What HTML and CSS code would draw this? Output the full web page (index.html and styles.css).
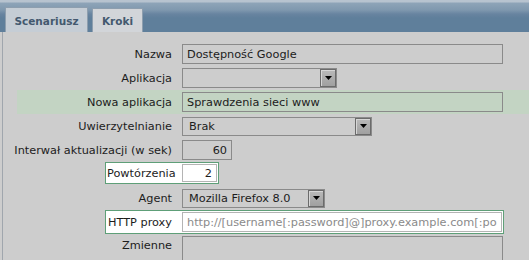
FILE: index.html
```html
<!DOCTYPE html>
<html lang="pl">
<head>
<meta charset="utf-8">
<title>Scenariusz</title>
<link rel="stylesheet" href="styles.css">
</head>
<body>
<div class="tabbar">
  <div class="tab active">Scenariusz</div>
  <div class="tab">Kroki</div>
</div>
<div class="panel">
  <div class="row">
    <div class="lab">Nazwa</div>
    <input class="txt w-long" type="text" value="Dostępność Google">
  </div>
  <div class="row">
    <div class="lab">Aplikacja</div>
    <div class="select w-app"><span class="sel-text"></span><span class="sel-btn"><svg width="7" height="4" viewBox="0 0 7 4"><polygon points="0,0 7,0 3.5,4" fill="#000"/></svg></span></div>
  </div>
  <div class="row hl">
    <div class="lab">Nowa aplikacja</div>
    <input class="txt w-long" type="text" value="Sprawdzenia sieci www">
  </div>
  <div class="row">
    <div class="lab">Uwierzytelnianie</div>
    <div class="select w-auth"><span class="sel-text">Brak</span><span class="sel-btn"><svg width="7" height="4" viewBox="0 0 7 4"><polygon points="0,0 7,0 3.5,4" fill="#000"/></svg></span></div>
  </div>
  <div class="row">
    <div class="lab">Interwał aktualizacji (w sek)</div>
    <input class="txt w-num num" type="text" value="60">
  </div>
  <div class="row boxed top">
    <div class="box">
      <div class="lab-in">Powtórzenia</div>
      <input class="txt white w-rep num" type="text" value="2">
    </div>
  </div>
  <div class="row">
    <div class="lab">Agent</div>
    <div class="select w-agent"><span class="sel-text">Mozilla Firefox 8.0</span><span class="sel-btn"><svg width="7" height="4" viewBox="0 0 7 4"><polygon points="0,0 7,0 3.5,4" fill="#000"/></svg></span></div>
  </div>
  <div class="row boxed">
    <div class="box">
      <div class="lab-in">HTTP proxy</div>
      <input class="txt white w-proxy" type="text" placeholder="http://[username[:password]@]proxy.example.com[:port]">
    </div>
  </div>
  <div class="row tall">
    <div class="lab">Zmienne</div>
    <textarea class="area"></textarea>
  </div>
</div>
</body>
</html>
```
FILE: styles.css
```css
html, body {
  margin: 0;
  padding: 0;
}
body {
  background: #cdcdcd;
  font-family: "DejaVu Sans", Verdana, sans-serif;
  font-size: 11.3px;
  color: #1c1c1c;
  width: 529px;
  height: 260px;
  overflow: hidden;
}
.tabbar {
  height: 32px;
  box-sizing: border-box;
  display: flex;
  align-items: flex-end;
  gap: 4px;
  padding-left: 5px;
  background: linear-gradient(to bottom, #b7c3cf 0, #b7c3cf 2px, #8ea4b8 3px, #7f98ae 10px, #6884a0 14px, #5f7f9b 18px, #5f7f9b 100%);
}
.tab {
  box-sizing: border-box;
  height: 24px;
  border: 1px solid #8d9eae;
  border-bottom: none;
  font-weight: bold;
  font-size: 10.5px;
  color: #43596f;
  display: flex;
  align-items: center;
  justify-content: center;
  background: #d2d5d9;
  width: 51px;
  padding-top: 1px;
}
.tab.active {
  height: 25px;
  width: 83px;
  background: #c5cdd5;
}
.panel {
  margin-left: 2px;
  border-left: 1px solid #a0a6ad;
  padding-left: 1px;
  padding-top: 10px;
  height: 218px;
}
.row {
  display: flex;
  align-items: center;
  height: 24px;
}
.row.top {
  align-items: flex-start;
}
.row.hl {
  margin-left: 13px;
  background: #c3d4c3;
}
.lab {
  width: 168px;
  flex: 0 0 auto;
  text-align: right;
  margin-right: 10px;
  white-space: nowrap;
}
.row.hl .lab {
  width: 155px;
}
.txt {
  box-sizing: border-box;
  height: 20px;
  margin: 0;
  padding: 0 4px;
  border: 1px solid #8a8a8a;
  background: transparent;
  font-family: "DejaVu Sans", Verdana, sans-serif;
  font-size: 11.3px;
  color: #1c1c1c;
  outline: none;
}
.txt.num {
  text-align: right;
}
.txt.white {
  background: #fff;
  border-color: #b4b4b4;
}
.txt::placeholder {
  color: #8a8a8a;
  opacity: 1;
}
.w-long { width: 321px; }
.w-num { width: 50px; }
.w-rep { width: 35px; height: 18px; }
.w-proxy { width: 320px; }
.select {
  box-sizing: border-box;
  height: 20px;
  border: 1px solid #8a8a8a;
  display: flex;
  align-items: stretch;
}
.w-app { width: 155px; }
.w-auth { width: 190px; height: 19px; }
.w-agent { width: 143px; height: 19px; }
.sel-text {
  flex: 1;
  padding-left: 6px;
  display: flex;
  align-items: center;
}
.sel-btn {
  flex: 0 0 auto;
  width: 16px;
  box-sizing: border-box;
  border: 1px solid #6b6b6b;
  background: linear-gradient(to bottom, #b9b9b9, #a0a0a0);
  box-shadow: inset 1px 1px 0 #d6d6d6;
  display: flex;
  align-items: center;
  justify-content: center;
}
.row.boxed {
  padding-left: 101px;
}
.box {
  display: flex;
  align-items: center;
  border: 1px solid #5e9f78;
  background: #fff;
  padding: 1px;
}
.lab-in {
  width: 65px;
  text-align: right;
  margin-right: 10px;
  white-space: nowrap;
}
.row.tall {
  height: 26px;
  align-items: flex-start;
}
.row.tall .lab {
  padding-top: 5px;
}
.area {
  box-sizing: border-box;
  margin: 2px 0 0 0;
  width: 321px;
  height: 24px;
  border: 1px solid #8a8a8a;
  border-bottom: none;
  background: transparent;
  resize: none;
  outline: none;
}
```
